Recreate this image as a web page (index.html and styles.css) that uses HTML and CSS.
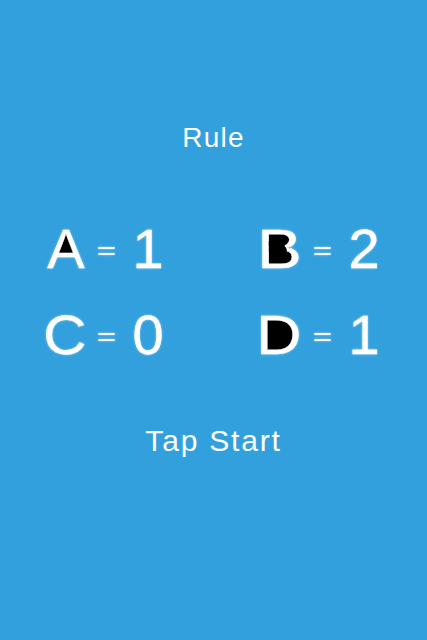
FILE: index.html
```html
<!DOCTYPE html>
<html lang="en">
<head>
<meta charset="utf-8">
<title>Rule</title>
<link rel="stylesheet" href="styles.css">
</head>
<body>
<main class="screen">
  <h1 class="title">Rule</h1>
  <section class="rules">
    <div class="row">
      <div class="cell">
        <svg class="glyph letter" viewBox="0 0 44 52" width="44" height="52">
          <polygon class="hole" points="22,10 13,31 31,31"/>
          <text x="22" y="46">A</text>
        </svg>
        <svg class="glyph eq" viewBox="0 0 31 52" width="31" height="52"><text transform="translate(15.5 0) scale(1.25 1)" x="0" y="37">=</text></svg>
        <svg class="glyph digit" viewBox="0 0 40 52" width="40" height="52"><text x="20" y="46">1</text></svg>
      </div>
      <div class="cell">
        <svg class="glyph letter" viewBox="0 0 44 52" width="44" height="52">
          <path class="hole" d="M5.5 8 H24.5 Q31.5 8 31.5 16 Q31.5 22 27.5 25 Q34.5 27 34.5 34 Q34.5 44 25.5 44 H5.5 Z"/>
          <text transform="translate(19.5 0) scale(1.2 1)" x="0" y="46">B</text>
          <path class="hole" d="M8.8 19 H24.5 Q26.5 21.5 24.5 24 Q27 26 27 29 H8.8 Z"/>
        </svg>
        <svg class="glyph eq" viewBox="0 0 31 52" width="31" height="52"><text transform="translate(15.5 0) scale(1.25 1)" x="0" y="37">=</text></svg>
        <svg class="glyph digit" viewBox="0 0 40 52" width="40" height="52"><text x="20" y="46">2</text></svg>
      </div>
    </div>
    <div class="row">
      <div class="cell">
        <svg class="glyph letter" viewBox="0 0 44 52" width="44" height="52">
          <text transform="translate(21 0) scale(1.07 1)" x="0" y="46">C</text>
        </svg>
        <svg class="glyph eq" viewBox="0 0 31 52" width="31" height="52"><text transform="translate(15.5 0) scale(1.25 1)" x="0" y="37">=</text></svg>
        <svg class="glyph digit" viewBox="0 0 40 52" width="40" height="52"><text x="20" y="46">0</text></svg>
      </div>
      <div class="cell">
        <svg class="glyph letter" viewBox="0 0 44 52" width="44" height="52">
          <path class="hole" d="M5 8 H19 Q34 8 34 26 Q34 44 19 44 H5 Z"/>
          <text transform="translate(19 0) scale(1.12 1)" x="0" y="46">D</text>
        </svg>
        <svg class="glyph eq" viewBox="0 0 31 52" width="31" height="52"><text transform="translate(15.5 0) scale(1.25 1)" x="0" y="37">=</text></svg>
        <svg class="glyph digit" viewBox="0 0 40 52" width="40" height="52"><text x="20" y="46">1</text></svg>
      </div>
    </div>
  </section>
  <p class="start">Tap Start</p>
</main>
</body>
</html>
```
FILE: styles.css
```css
html, body {
  margin: 0;
  padding: 0;
  height: 100%;
  background: #33a0de;
}

.screen {
  display: flex;
  flex-direction: column;
  align-items: center;
  padding-top: 124px;
  font-family: "Liberation Sans", Arial, sans-serif;
  color: #ffffff;
}

.title {
  margin: 0;
  font-size: 28px;
  font-weight: normal;
  line-height: 28px;
  letter-spacing: 1.2px;
}

.rules {
  display: flex;
  flex-direction: column;
  gap: 34px;
  margin-top: 70px;
}

.row {
  display: flex;
  gap: 92px;
}

.cell {
  display: flex;
  align-items: flex-start;
}

.glyph {
  display: block;
  overflow: visible;
  filter: blur(0.35px) drop-shadow(0 0 1.2px rgba(255, 255, 255, 0.5));
}

.glyph text {
  font-family: "Liberation Sans", Arial, sans-serif;
  font-size: 56px;
  fill: #ffffff;
  stroke: #ffffff;
  stroke-width: 0.3px;
  stroke-linejoin: round;
  stroke-linecap: round;
  text-anchor: middle;
}

.glyph .hole {
  fill: #000000;
}

.eq {
  margin-left: 3px;
}

.eq text {
  font-size: 26px;
  stroke-width: 0.2px;
}

.digit {
  margin-left: 6px;
}

.start {
  margin: 66px 0 0;
  font-size: 30px;
  line-height: 30px;
  letter-spacing: 1.8px;
}
```
